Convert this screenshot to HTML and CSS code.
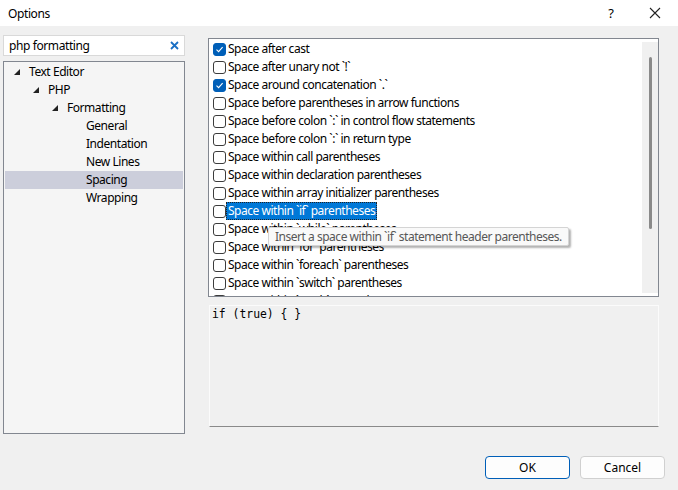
FILE: index.html
```html
<!DOCTYPE html>
<html>
<head>
<meta charset="utf-8">
<link rel="stylesheet" href="styles.css">
</head>
<body>
<div class="window">
  <div class="titlebar">
    <span class="title">Options</span>
    <span class="tb-actions">
      <span class="help">?</span>
      <svg class="close" width="12" height="12" viewBox="0 0 12 12"><path d="M1 1L11 11M11 1L1 11" stroke="#222" stroke-width="1.1" fill="none"/></svg>
    </span>
  </div>
  <div class="content">
    <div class="left">
      <div class="search">
        <span class="search-text">php formatting</span>
        <svg class="clear" width="9" height="9" viewBox="0 0 9 9"><path d="M1 1L8 8M8 1L1 8" stroke="#1a6fc4" stroke-width="1.8" fill="none"/></svg>
      </div>
      <div class="tree">
        <div class="node lvl0"><svg class="tri" width="6" height="6" viewBox="0 0 6 6"><polygon points="6,0 6,6 0,6" fill="#222"/></svg>Text Editor</div>
        <div class="node lvl1"><svg class="tri" width="6" height="6" viewBox="0 0 6 6"><polygon points="6,0 6,6 0,6" fill="#222"/></svg>PHP</div>
        <div class="node lvl2"><svg class="tri" width="6" height="6" viewBox="0 0 6 6"><polygon points="6,0 6,6 0,6" fill="#222"/></svg>Formatting</div>
        <div class="node lvl3">General</div>
        <div class="node lvl3">Indentation</div>
        <div class="node lvl3">New Lines</div>
        <div class="node lvl3 selected">Spacing</div>
        <div class="node lvl3">Wrapping</div>
      </div>
    </div>
    <div class="right">
      <div class="list">
        <div class="rows">
          <div class="row"><span class="cb checked"><svg width="9" height="9" viewBox="0 0 9 9"><path d="M1.5 4.6L3.6 6.6L7.6 2.2" stroke="#fff" stroke-width="1.1" fill="none"/></svg></span><span class="lbl">Space after cast</span></div>
          <div class="row"><span class="cb"></span><span class="lbl">Space after unary not `!`</span></div>
          <div class="row"><span class="cb checked"><svg width="9" height="9" viewBox="0 0 9 9"><path d="M1.5 4.6L3.6 6.6L7.6 2.2" stroke="#fff" stroke-width="1.1" fill="none"/></svg></span><span class="lbl">Space around concatenation `.`</span></div>
          <div class="row"><span class="cb"></span><span class="lbl">Space before parentheses in arrow functions</span></div>
          <div class="row"><span class="cb"></span><span class="lbl">Space before colon `:` in control flow statements</span></div>
          <div class="row"><span class="cb"></span><span class="lbl">Space before colon `:` in return type</span></div>
          <div class="row"><span class="cb"></span><span class="lbl">Space within call parentheses</span></div>
          <div class="row"><span class="cb"></span><span class="lbl">Space within declaration parentheses</span></div>
          <div class="row"><span class="cb"></span><span class="lbl">Space within array initializer parentheses</span></div>
          <div class="row"><span class="cb"></span><span class="lbl focused">Space within `if` parentheses</span></div>
          <div class="row"><span class="cb"></span><span class="lbl">Space within `while` parentheses</span></div>
          <div class="row"><span class="cb"></span><span class="lbl">Space within `for` parentheses</span></div>
          <div class="row"><span class="cb"></span><span class="lbl">Space within `foreach` parentheses</span></div>
          <div class="row"><span class="cb"></span><span class="lbl">Space within `switch` parentheses</span></div>
          <div class="row"><span class="cb"></span><span class="lbl">Space within `catch` parentheses</span></div>
        </div>
        <div class="scrollbar"><div class="thumb"></div></div>
        <div class="tooltip">Insert a space within `if` statement header parentheses.</div>
      </div>
      <div class="preview">if (true) { }</div>
    </div>
  </div>
  <div class="footer">
    <button class="btn default">OK</button>
    <button class="btn">Cancel</button>
  </div>
</div>
</body>
</html>
```

FILE: styles.css
```css
html, body {
  margin: 0;
  padding: 0;
}
body {
  background: #f0f0f0;
  font-family: "Noto Sans", "Open Sans", sans-serif;
  font-size: 12px;
  color: #000;
  width: 678px;
  height: 490px;
  overflow: hidden;
}
.window {
  display: flex;
  flex-direction: column;
  height: 490px;
}
.titlebar {
  height: 26px;
  background: #ffffff;
  display: flex;
  align-items: center;
  justify-content: space-between;
  padding: 0 17px 0 8px;
}
.title {
  font-size: 12px;
  letter-spacing: -0.4px;
}
.tb-actions {
  display: flex;
  align-items: center;
  gap: 35px;
}
.help {
  font-size: 13px;
}
.content {
  display: flex;
  gap: 23px;
  padding: 9px 0 0 3px;
}
.left {
  width: 182px;
  display: flex;
  flex-direction: column;
  gap: 5px;
}
.search {
  height: 21px;
  box-sizing: border-box;
  background: #fff;
  border: 1px solid #d9d9d9;
  display: flex;
  align-items: center;
  justify-content: space-between;
  padding: 0 5px 0 5px;
}
.search-text {
  letter-spacing: -0.4px;
}
.tree {
  height: 373px;
  box-sizing: border-box;
  background: #f5f5f5;
  border: 1px solid #828790;
  padding: 1px 1px 0 1px;
}
.node {
  height: 18px;
  line-height: 18px;
  display: flex;
  align-items: center;
  letter-spacing: -0.45px;
  white-space: nowrap;
}
.tri {
  margin-right: 9px;
  flex: none;
}
.lvl0 { padding-left: 9px; }
.lvl1 { padding-left: 28px; }
.lvl2 { padding-left: 47px; }
.lvl3 { padding-left: 81px; }
.node.selected {
  background: #cccedb;
}
.right {
  width: 451px;
  margin-top: 3px;
  display: flex;
  flex-direction: column;
  gap: 8px;
}
.list {
  position: relative;
  height: 259px;
  box-sizing: border-box;
  border: 1px solid #828790;
  background: #fff;
  display: flex;
  overflow: hidden;
}
.rows {
  flex: 1;
  padding: 1px 0 0 4px;
  overflow: hidden;
}
.row {
  height: 18px;
  display: flex;
  align-items: center;
  white-space: nowrap;
}
.cb {
  width: 13px;
  height: 13px;
  box-sizing: border-box;
  border: 1px solid #3c3c3c;
  border-radius: 3px;
  background: #fff;
  margin-right: 0;
  flex: none;
  display: flex;
  align-items: center;
  justify-content: center;
}
.cb.checked {
  background: #005fb8;
  border-color: #005fb8;
}
.lbl {
  letter-spacing: -0.48px;
  padding: 0 1px;
  line-height: 16px;
  border: 1px dotted transparent;
}
.lbl.focused {
  background: #0078d7;
  color: #fff;
  border-color: #222;
}
.scrollbar {
  width: 16px;
  margin: 3px 0 3px 0;
  background: #f0f0f0;
  display: flex;
  justify-content: center;
  padding-top: 15px;
  box-sizing: border-box;
}
.thumb {
  width: 3px;
  height: 172px;
  border-radius: 2px;
  background: #8a8a8a;
}
.tooltip {
  position: absolute;
  left: 59px;
  top: 188px;
  height: 19px;
  box-sizing: border-box;
  padding: 0 6px;
  line-height: 17px;
  background: #f9f9f9;
  border: 1px solid #d4d4d4;
  border-radius: 2px;
  box-shadow: 2px 2px 2px rgba(0,0,0,0.3);
  color: #575757;
  white-space: nowrap;
  letter-spacing: -0.48px;
}
.preview {
  height: 122px;
  margin-left: 1px;
  box-sizing: border-box;
  background: #f0f0f0;
  border: 1px solid #fbfbfb;
  border-bottom: 1px solid #8a8a8a;
  font-family: "DejaVu Sans Mono", "Liberation Mono", monospace;
  font-size: 11.4px;
  line-height: 14px;
  padding: 1px 2px;
}
.footer {
  display: flex;
  justify-content: flex-end;
  gap: 10px;
  padding: 22px 13px 0 0;
}
.btn {
  width: 85px;
  height: 23px;
  box-sizing: border-box;
  background: #fdfdfd;
  border: 1px solid #d0d0d0;
  border-radius: 4px;
  font-family: "Noto Sans", "Open Sans", sans-serif;
  font-size: 12px;
  color: #000;
  padding: 0;
}
.btn.default {
  border: 1px solid #005fb8;
}
```
